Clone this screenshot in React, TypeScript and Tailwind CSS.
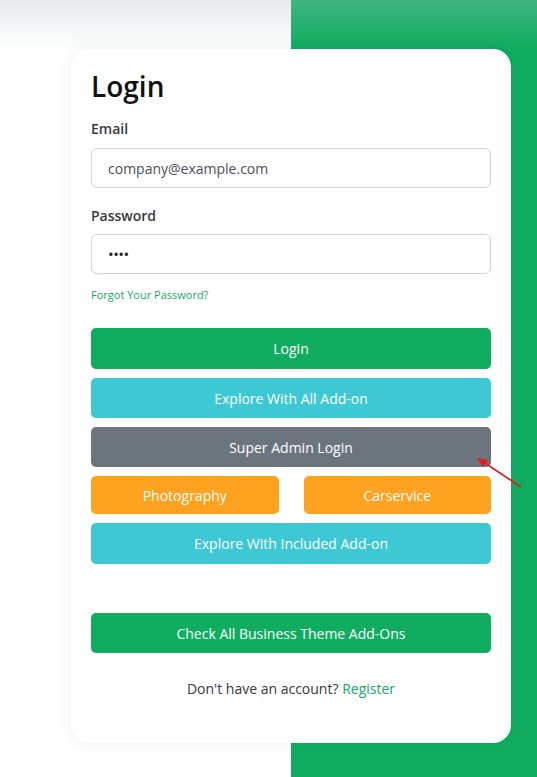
const buttonBase =
  'w-full rounded-[5px] text-[14px] text-white flex items-center justify-center';

const App = () => {
  return (
    <div
      className="relative h-[777px] w-full overflow-hidden pt-[49px] [background:linear-gradient(#e8e9ed,#ffffff_50px)_left_top/291px_100%_no-repeat,linear-gradient(#3fb67f,#10ad61_48px)_right_top/246px_100%_no-repeat] font-['Open_Sans',sans-serif]"
    >
      <div className="ml-[71px] w-[440px] h-[694px] rounded-[18px] bg-white px-[20px] pt-[20px] shadow-[0_0_18px_rgba(0,0,0,0.07)]">
        <h1 className="text-[28px] leading-[34px] font-semibold text-[#111]">Login</h1>

        <label className="block mt-[16px] text-[14px] leading-[20px] font-semibold text-[#343a40]">Email</label>
        <div className="mt-[9px] h-[40px] rounded-[6px] border border-[#ced4da] px-[16px] flex items-center text-[14px] text-[#495057]">
          company@example.com
        </div>

        <label className="block mt-[18px] text-[14px] leading-[20px] font-semibold text-[#343a40]">Password</label>
        <div className="mt-[8px] h-[40px] rounded-[6px] border border-[#ced4da] px-[16px] flex items-center text-[15px] text-[#212529] tracking-[-0.5px]">
          ••••
        </div>

        <div className="mt-[13px] text-[11px] leading-[16px] text-[#18a865]">Forgot Your Password?</div>

        <div className="mt-[25px] flex flex-col gap-[9px]">
          <div className={`${buttonBase} h-[41px] bg-[#10ad61]`}>Login</div>
          <div className={`${buttonBase} h-[40px] bg-[#3ec8d4]`}>Explore With All Add-on</div>
          <div className={`${buttonBase} h-[40px] bg-[#6c757d]`}>Super Admin Login</div>
          <div className="grid grid-cols-2 gap-x-[25px]">
            <div className={`${buttonBase} h-[38px] bg-[#ffa21f]`}>Photography</div>
            <div className={`${buttonBase} h-[38px] bg-[#ffa21f]`}>Carservice</div>
          </div>
          <div className={`${buttonBase} h-[41px] bg-[#3ec8d4]`}>Explore With Included Add-on</div>
        </div>

        <div className={`${buttonBase} h-[40px] mt-[49px] bg-[#10ad61]`}>Check All Business Theme Add-Ons</div>

        <p className="mt-[26px] text-center text-[14px] leading-[20px] text-[#343a40]">
          Don't have an account? <span className="text-[#18a865]">Register</span>
        </p>
      </div>

      {/* red annotation arrow */}
      <svg className="absolute left-[470px] top-[450px]" width="60" height="45" viewBox="0 0 60 45">
        <line x1="51" y1="37" x2="12" y2="11" stroke="#e21b1b" strokeWidth="1.6" />
        <polygon points="7,8 18,10 13,17" fill="#e21b1b" />
      </svg>
    </div>
  );
};

export default App;
